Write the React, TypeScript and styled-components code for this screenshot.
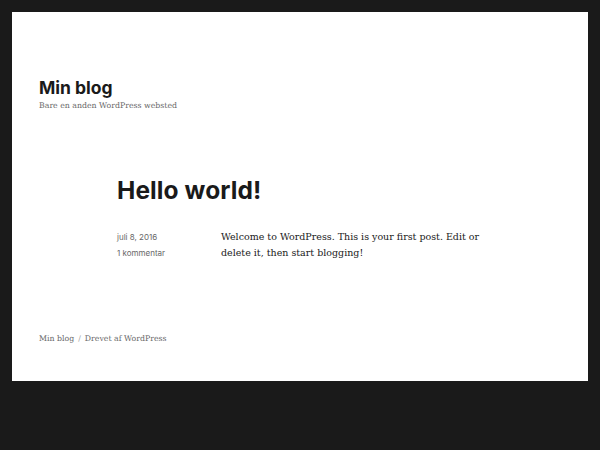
import React from "react";
import styled, { createGlobalStyle } from "styled-components";

const Global = createGlobalStyle`
  html, body { margin: 0; padding: 0; background: #1a1a1a; }
  body { font-family: "DejaVu Serif", "Liberation Serif", serif; }
`;

const Site = styled.div`
  margin: 12px;
  background: #ffffff;
  height: 369px;
  box-sizing: border-box;
  padding: 0 27px;
  display: flex;
  flex-direction: column;
`;

const Header = styled.header`
  padding-top: 65px;
`;

const SiteTitle = styled.h1`
  margin: 0;
  font-family: Inter, "Liberation Sans", sans-serif;
  font-weight: 700;
  font-size: 17.5px;
  line-height: 22px;
  color: #1a1a1a;
`;

const Tagline = styled.p`
  margin: 0;
  font-family: "DejaVu Serif", serif;
  font-size: 7.8px;
  line-height: 13px;
  color: #686868;
`;

const Article = styled.article`
  margin: 62px 0 0 78px;
`;

const PostTitle = styled.h2`
  margin: 0;
  font-family: Inter, "Liberation Sans", sans-serif;
  font-weight: 700;
  font-size: 24.5px;
  line-height: 32px;
  color: #1a1a1a;
  letter-spacing: 0.1px;
`;

const PostBody = styled.div`
  margin-top: 23px;
  display: grid;
  grid-template-columns: 104px 270px;
`;

const Meta = styled.div`
  display: flex;
  flex-direction: column;
  font-family: Inter, "Liberation Sans", sans-serif;
  font-size: 8px;
  line-height: 16px;
  color: #686868;
`;

const Content = styled.p`
  margin: 0;
  font-family: "DejaVu Serif", serif;
  font-size: 9.5px;
  line-height: 16px;
  color: #1a1a1a;
`;

const Footer = styled.footer`
  margin-top: auto;
  padding-bottom: 35px;
  font-family: "DejaVu Serif", serif;
  font-size: 7.8px;
  line-height: 14px;
  color: #686868;
  display: flex;
  gap: 4px;
`;

const Sep = styled.span`
  color: #a0a0a0;
`;

export default function App() {
  return (
    <>
      <Global />
      <Site>
        <Header>
          <SiteTitle>Min blog</SiteTitle>
          <Tagline>Bare en anden WordPress websted</Tagline>
        </Header>
        <Article>
          <PostTitle>Hello world!</PostTitle>
          <PostBody>
            <Meta>
              <span>juli 8, 2016</span>
              <span>1 kommentar</span>
            </Meta>
            <Content>
              Welcome to WordPress. This is your first post. Edit or delete it, then start blogging!
            </Content>
          </PostBody>
        </Article>
        <Footer>
          <span>Min blog</span>
          <Sep>/</Sep>
          <span>Drevet af WordPress</span>
        </Footer>
      </Site>
    </>
  );
}
